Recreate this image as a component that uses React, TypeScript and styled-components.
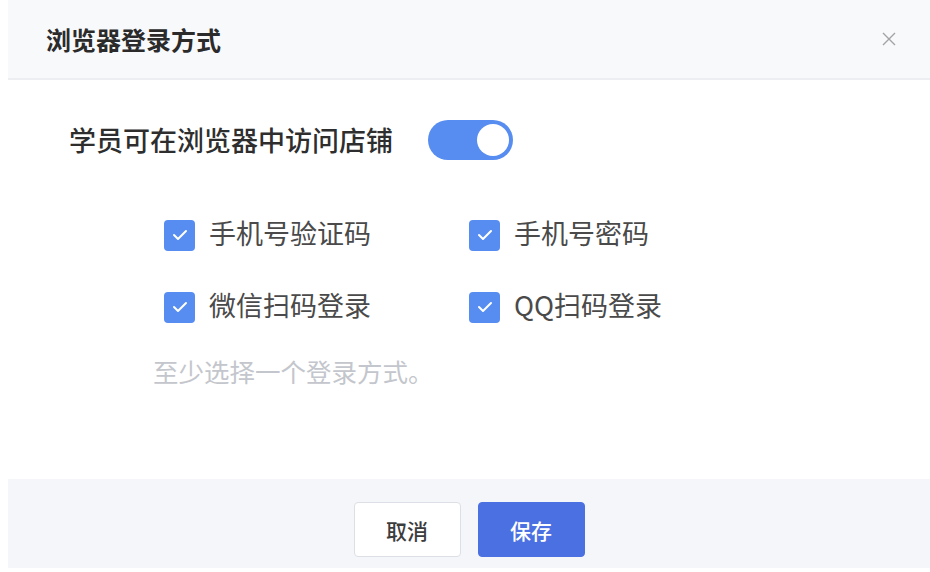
import React, { useState } from "react";
import styled, { createGlobalStyle } from "styled-components";

const GlobalStyle = createGlobalStyle`
  html, body {
    margin: 0;
    padding: 0;
    background: #ffffff;
  }
  body {
    font-family: "Noto Sans CJK SC", "Noto Sans", sans-serif;
  }
`;

type check_props = {
    label: string,
    checked: boolean,
    onToggle: () => void,
}

const Page = styled.div`
  width: 930px;
  height: 572px;
  box-sizing: border-box;
  padding: 0 0 4px 8px;
  display: flex;
`;

const Dialog = styled.div`
  flex: 1;
  display: flex;
  flex-direction: column;
  background: #ffffff;
`;

const Header = styled.div`
  height: 78px;
  display: flex;
  align-items: center;
  justify-content: space-between;
  padding: 0 32px 0 38px;
  background: #f8f9fb;
  border-bottom: 2px solid #eceef1;
`;

const Title = styled.h2`
  margin: 0;
  font-size: 25px;
  line-height: 1;
  font-weight: 700;
  color: #2b2b2b;
`;

const CloseButton = styled.button`
  width: 18px;
  height: 18px;
  padding: 0;
  border: 0;
  background: none;
  cursor: pointer;
  display: flex;
  align-items: center;
  justify-content: center;
  svg {
    display: block;
  }
`;

const Body = styled.div`
  flex: 1;
  padding: 40px 0 0 61px;
  display: flex;
  flex-direction: column;
`;

const SwitchRow = styled.div`
  display: flex;
  align-items: center;
  gap: 35px;
  height: 40px;
`;

const SwitchLabel = styled.span`
  font-size: 27px;
  font-weight: 500;
  color: #2e2e2e;
  line-height: 1;
  padding-bottom: 2px;
`;

const SwitchTrack = styled.button<{ $on: boolean }>`
  position: relative;
  width: 85px;
  height: 40px;
  padding: 0;
  border: 0;
  border-radius: 20px;
  background: ${p => (p.$on ? "#578df0" : "#d5d8de")};
  cursor: pointer;
`;

const SwitchKnob = styled.span<{ $on: boolean }>`
  position: absolute;
  top: 4px;
  left: ${p => (p.$on ? "49px" : "4px")};
  width: 32px;
  height: 32px;
  border-radius: 50%;
  background: #ffffff;
`;

const Options = styled.div`
  margin: 60px 0 0 95px;
  display: grid;
  grid-template-columns: 305px 305px;
  row-gap: 42px;
`;

const Option = styled.label`
  display: flex;
  align-items: center;
  gap: 14px;
  height: 30px;
  cursor: pointer;
  user-select: none;
`;

const Box = styled.span<{ $checked: boolean }>`
  width: 31px;
  height: 31px;
  flex: none;
  box-sizing: border-box;
  border-radius: 4px;
  background: ${p => (p.$checked ? "#578df0" : "#ffffff")};
  border: ${p => (p.$checked ? "0" : "1px solid #cfd3da")};
  display: flex;
  align-items: center;
  justify-content: center;
`;

const OptionText = styled.span`
  font-size: 27px;
  color: #4a4a4a;
  line-height: 1;
  padding-bottom: 6px;
`;

const Hint = styled.p`
  margin: 31px 0 0 84px;
  font-size: 25.5px;
  line-height: 36px;
  color: #c3c6cc;
`;

const Footer = styled.div`
  height: 89px;
  box-sizing: border-box;
  padding: 23px 0 11px;
  background: #f5f6fa;
  display: flex;
  justify-content: center;
  gap: 17px;
`;

const Button = styled.button<{ $primary?: boolean }>`
  width: 107px;
  height: 55px;
  box-sizing: border-box;
  border-radius: 4px;
  font-family: inherit;
  font-size: 21px;
  font-weight: 500;
  cursor: pointer;
  border: 1px solid ${p => (p.$primary ? "#4b70e2" : "#dcdfe5")};
  background: ${p => (p.$primary ? "#4b70e2" : "#ffffff")};
  color: ${p => (p.$primary ? "#ffffff" : "#3c3c3c")};
`;

const CheckOption = ({label, checked, onToggle}: check_props) => (
  <Option onClick={onToggle}>
    <Box $checked={checked}>
      {checked && (
        <svg width="16" height="12" viewBox="0 0 16 12" fill="none">
          <path d="M2 6 L6 10 L14 2" stroke="#ffffff" strokeWidth="2" strokeLinecap="round" strokeLinejoin="round" />
        </svg>
      )}
    </Box>
    <OptionText>{label}</OptionText>
  </Option>
);

const labels = ["手机号验证码", "手机号密码", "微信扫码登录", "QQ扫码登录"];

export default function App() {
  const [enabled, setEnabled] = useState(true);
  const [checks, setChecks] = useState([true, true, true, true]);

  const flip = (i: number) =>
    setChecks(prev => prev.map((v, j) => (j === i ? !v : v)));

  return (
    <Page>
      <GlobalStyle />
      <Dialog>
        <Header>
          <Title>浏览器登录方式</Title>
          <CloseButton aria-label="关闭">
            <svg width="14" height="14" viewBox="0 0 14 14">
              <path d="M1 1 L13 13 M13 1 L1 13" stroke="#a3a3a3" strokeWidth="1.4" />
            </svg>
          </CloseButton>
        </Header>
        <Body>
          <SwitchRow>
            <SwitchLabel>学员可在浏览器中访问店铺</SwitchLabel>
            <SwitchTrack $on={enabled} onClick={() => setEnabled(!enabled)}>
              <SwitchKnob $on={enabled} />
            </SwitchTrack>
          </SwitchRow>
          <Options>
            {labels.map((l, i) => (
              <CheckOption key={l} label={l} checked={checks[i]} onToggle={() => flip(i)} />
            ))}
          </Options>
          <Hint>至少选择一个登录方式。</Hint>
        </Body>
        <Footer>
          <Button>取消</Button>
          <Button $primary>保存</Button>
        </Footer>
      </Dialog>
    </Page>
  );
}
